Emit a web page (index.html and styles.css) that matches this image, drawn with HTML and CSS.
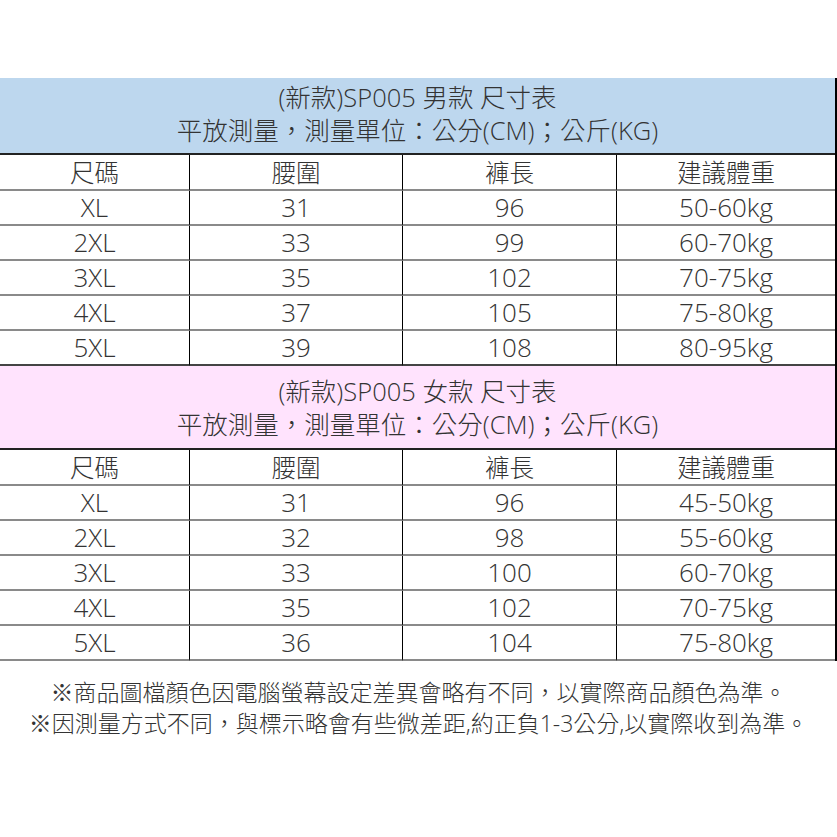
FILE: index.html
```html
<!DOCTYPE html>
<html lang="zh-Hant">
<head>
<meta charset="utf-8">
<title>SP005 尺寸表</title>
<link rel="stylesheet" href="styles.css">
</head>
<body>
<div class="page">
  <div class="chart">
    <div class="title blue">
      <div class="tline">(新款)SP005 男款 尺寸表</div>
      <div class="tline">平放測量，測量單位：公分(CM)；公斤(KG)</div>
    </div>
    <div class="grid">
      <div class="cell head">尺碼</div><div class="cell head">腰圍</div><div class="cell head">褲長</div><div class="cell head last">建議體重</div>
      <div class="cell">XL</div><div class="cell">31</div><div class="cell">96</div><div class="cell last">50-60kg</div>
      <div class="cell">2XL</div><div class="cell">33</div><div class="cell">99</div><div class="cell last">60-70kg</div>
      <div class="cell">3XL</div><div class="cell">35</div><div class="cell">102</div><div class="cell last">70-75kg</div>
      <div class="cell">4XL</div><div class="cell">37</div><div class="cell">105</div><div class="cell last">75-80kg</div>
      <div class="cell end">5XL</div><div class="cell end">39</div><div class="cell end">108</div><div class="cell last end">80-95kg</div>
    </div>
    <div class="title pink">
      <div class="tline">(新款)SP005 女款 尺寸表</div>
      <div class="tline">平放測量，測量單位：公分(CM)；公斤(KG)</div>
    </div>
    <div class="grid">
      <div class="cell head">尺碼</div><div class="cell head">腰圍</div><div class="cell head">褲長</div><div class="cell head last">建議體重</div>
      <div class="cell">XL</div><div class="cell">31</div><div class="cell">96</div><div class="cell last">45-50kg</div>
      <div class="cell">2XL</div><div class="cell">32</div><div class="cell">98</div><div class="cell last">55-60kg</div>
      <div class="cell">3XL</div><div class="cell">33</div><div class="cell">100</div><div class="cell last">60-70kg</div>
      <div class="cell">4XL</div><div class="cell">35</div><div class="cell">102</div><div class="cell last">70-75kg</div>
      <div class="cell">5XL</div><div class="cell">36</div><div class="cell">104</div><div class="cell last">75-80kg</div>
    </div>
  </div>
  <div class="notes">
    <p>※商品圖檔顏色因電腦螢幕設定差異會略有不同，以實際商品顏色為準。</p>
    <p>※因測量方式不同，與標示略會有些微差距,約正負1-3公分,以實際收到為準。</p>
  </div>
</div>
</body>
</html>
```

FILE: styles.css
```css
html, body {
  margin: 0;
  padding: 0;
  background: #ffffff;
}

.page {
  width: 837px;
  padding-top: 78px;
  font-family: "Open Sans", "Noto Sans CJK TC", sans-serif;
  font-weight: 300;
  color: #333333;
}

.chart {
  border-right: 2px solid #000000;
}

.title {
  display: flex;
  flex-direction: column;
  justify-content: center;
  align-items: center;
  box-sizing: border-box;
  font-size: 25.5px;
  line-height: 33px;
  border-bottom: 2px solid #222222;
}

.title.blue {
  height: 77px;
  padding-bottom: 4px;
  background: #bdd7ee;
}

.title.pink {
  height: 84px;
  padding-top: 2px;
  background: #ffe3fd;
}

.tline {
  white-space: nowrap;
}

.grid {
  display: grid;
  grid-template-columns: 190px 213px 214px 218px;
}

.cell {
  display: flex;
  align-items: center;
  justify-content: center;
  font-size: 26px;
  padding-bottom: 2px;
  box-sizing: border-box;
  border-right: 1px solid #000000;
  border-bottom: 2px solid #8a8a8a;
  white-space: nowrap;
  height: 35px;
}

.cell.head {
  height: 36px;
  font-size: 24.5px;
}

.cell.last {
  border-right: none;
}

.cell.end {
  border-bottom-color: #444444;
}

.notes {
  padding-top: 16px;
  font-size: 23px;
  line-height: 31px;
  text-align: center;
}

.notes p {
  margin: 0;
  white-space: nowrap;
}
```
